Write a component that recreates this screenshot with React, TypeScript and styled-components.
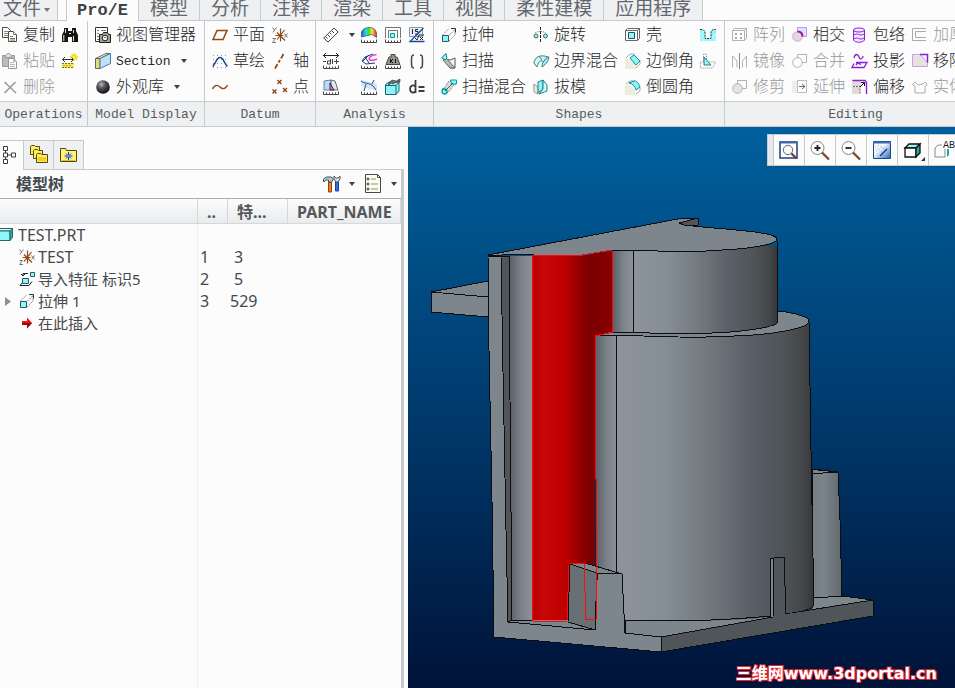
import React from "react";
import styled, { createGlobalStyle } from "styled-components";

const GlobalStyle = createGlobalStyle`
  * { box-sizing: border-box; }
  html, body, #root { height: 100%; }
  body { margin: 0; overflow: hidden; background: #fcfcfc; }
  button { font: inherit; color: inherit; }
`;

const sans = `"Noto Sans", "Noto Sans CJK SC", sans-serif`;
const mono = `"Liberation Mono", "Noto Sans CJK SC", monospace`;
const line = "#c6cacd";

/* ---------- icons ---------- */

const brown = "#8f4713";
const violet = "#8a1fd6";
const teal = "#00a0a0";
const aqua = "#8ef5f8";
const dim = "#b0b2b4";

const Ticks = () => (
  <g fill="none" stroke="#444">
    <path d="M.5 12.500v3h15v-3" />
    <path d="M3.500 13.500v2M6.500 13.500v2M9.500 13.500v2M12.500 13.500v2" />
  </g>
);

const icons: Record<string, React.ReactNode> = {
  copy: (
    <g fill="#fff" stroke="#4c4c46">
      <path d="M.5 .5h5l3 3v7h-8z" /><path d="M2 4.500h5M2 6.500h5M2 8.500h5" stroke="#87877c" />
      <path d="M6.500 4.500h5l3 3v7h-8z" /><path d="M11.500 4.500v3h3M8 9.500h3M8 11.500h5M8 13h5" stroke="#77776c" />
    </g>
  ),
  paste: (
    <g stroke="#999" fill="#bbb">
      <path d="M.5 2.500h12v11H.5z" /><path d="M3.500 2.500l2-2h2l2 2v2h-6z" fill="#ddd" />
      <path d="M6.500 5.500h5l3 3v7h-8z" fill="#fff" /><path d="M11.500 5.500v3h3M8 9.500h4M8 11.500h5M8 13.500h5" stroke="#bbb" />
    </g>
  ),
  remove: <path d="M2.500 3l11.500 11M13.500 3L2.500 14" stroke="#9b9b9b" strokeWidth="1.600" fill="none" />,
  find: (
    <g>
      <path d="M2 1h4v3h4V1h4v3l2 4v7h-6v-5H6v5H0V8l2-4z" fill="#161614" />
      <path d="M3.500 2v4M1.800 8v6M11.500 3v3M11.500 9v5M7 6.500h2" stroke="#e6e6c8" fill="none" />
    </g>
  ),
  units: (
    <g fill="none">
      <path d="M0 6.500h12M3 4L.5 6.500 3 9M9 4l2.500 2.500L9 9" stroke="#333" />
      <path d="M0 10h12v5H0z" fill="#f3e75a" /><path d="M0 10.500h12M2 12v1M5 12v1M8 12v1M0 14.500h12" stroke="#857500" strokeDasharray="2 1" />
      <path d="M12 0v3M12 5v3M8 4h3M13 4h3M9.500 1.500l2 2M12.500 4.500l2.500 2.500M14.500 1.500l-2 2" stroke="#f1dc00" strokeWidth="1.300" />
    </g>
  ),
  viewManager: (
    <g>
      <path d="M.5 .5h12v14H.5z" fill="#fff" stroke="#333" /><path d="M2 3.500h2M2 6.500h2M2 9.500h2M2 12.500h2M6 3.500h5" stroke="#777" />
      <path d="M4.500 7.500h3l1-2h4l1 2h2v8h-11z" fill="#a2a596" stroke="#20201c" /><circle cx="10" cy="11" r="2.800" fill="#eef2ff" stroke="#222" /><path d="M9 10h2v1H9z" fill="#5a74bc" />
    </g>
  ),
  section: (
    <g stroke="#666a56">
      <path d="M.5 5.500L11 .5h4l-10 5z" fill="#fff6ba" /><path d="M.5 5.500H5v10H.5z" fill="#ead978" /><path d="M5 5.500l10.500-5v10L5 15.500z" fill="#bfe2f8" stroke="#3d7dab" />
    </g>
  ),
  sphere: (
    <g>
      <defs><radialGradient id="ball" cx=".38" cy=".3" r=".7"><stop offset="0" stopColor="#b6babf" /><stop offset=".4" stopColor="#55585d" /><stop offset="1" stopColor="#101114" /></radialGradient></defs>
      <circle cx="8" cy="8" r="6.800" fill="url(#ball)" />
    </g>
  ),
  plane: <path d="M5 3.500h10l-4 9H1z" fill="none" stroke={brown} strokeWidth="1.500" />,
  sketch: (
    <g fill="none">
      <path d="M1 2.500h15M1 6.500h15M1 10.500h15M1 14.500h15" stroke="#8e98a6" strokeDasharray="1 3" />
      <path d="M.8 13.500L4 8.500C6 3 10 3 12 8.500l3.200 5" stroke="#164a94" strokeWidth="1.500" />
    </g>
  ),
  curve: <path d="M.5 10C3 5 6 6 8 8s5 3 7.500-2" fill="none" stroke={brown} strokeWidth="1.400" />,
  csys: (
    <g fill="none">
      <path d="M8.500 1.500v13M5 5.500l8 8M12.500 3L5 12.500M3.500 8.500h8" stroke={brown} strokeWidth="1.200" />
      <path d="M.5 .5l2 2.500 2-2.500M2.500 3L1 5.500M12.500 6.500l3 4M15.500 6.500l-3 4M.5 11.500h3l-3 4h3.500" stroke="#777" />
    </g>
  ),
  axis: <path d="M11.500 1l-2.500 4.500M8 7L6.500 9.500M5.500 11L3 15.500" stroke={brown} strokeWidth="1.700" fill="none" />,
  points: <path d="M5.500 1l4 4M9.500 1l-4 4M.5 10.500l4 4M4.500 10.500l-4 4M11 9l4 4M15 9l-4 4" stroke={brown} strokeWidth="1.400" fill="none" />,
  ruler: (
    <g fill="#fffefa" stroke="#444">
      <path d="M.7 11L11 1l4 4L5 15z" /><path d="M5 8l2 2M7 6l1.500 1.500M9 4l2 2M3 10l1.500 1.500" />
    </g>
  ),
  distance: (
    <g fill="none"><path d="M0 2.500h16M3 0L.5 2.500 3 5M13 0l2.500 2.500L13 5" stroke="#222" /><path d="M0 8.500h3M7.500 6v5h-3v-3h3M9.500 6v5M11 8.500h5M13.500 6v5" stroke="#444" /><Ticks /></g>
  ),
  draftCheck: (
    <g><path d="M1 2l7-1v10H1z" fill="#b9daf0" stroke="#6085a8" /><path d="M8 1l4 1 3 9H8z" fill="#e4ebee" stroke="#667" /><path d="M7 4l4 7H7z" fill="#ec64dd" stroke="#333" /><Ticks /></g>
  ),
  shade: (
    <g>
      <defs><linearGradient id="rainbow"><stop offset="0" stopColor="#214bff" /><stop offset=".3" stopColor="#28e0da" /><stop offset=".5" stopColor="#3fdb2c" /><stop offset=".7" stopColor="#f5e62c" /><stop offset="1" stopColor="#ec2045" /></linearGradient></defs>
      <path d="M.5 10V5C2 1 6 .5 9 .5c4 0 6 3 6.500 5.500v4.500L11 7.500z" fill="url(#rainbow)" stroke="#3b4a67" strokeWidth=".7" /><Ticks />
    </g>
  ),
  curvature: (
    <g fill="none"><path d="M12 1L4 4 1 8l4 3 9-1M4 4l4 6M8 2L2 8" stroke="#273a7a" /><path d="M15.500 1.500C9 2 7 6 9 7s4 0 7-1" stroke="#e044c4" strokeWidth="1.500" /><Ticks /></g>
  ),
  deviation: (
    <g fill="none"><path d="M0 1l16 4v7L0 7z" fill="#d0e4f6" /><path d="M0 2c5 4 10 0 15 9M13 1l-2 4M5 5L3 12" stroke="#214c9c" /><Ticks /></g>
  ),
  pairClearance: (
    <g fill="none"><path d="M.5 11V.5h15V11M3.500 11V3.500h9V11" stroke="#777" /><path d="M5.500 6.500h4v4h-4z" fill={aqua} stroke={teal} /><Ticks /></g>
  ),
  mass: (
    <g><path d="M6 4V1.500h4V4h2l3 7.500H1L4 4z" fill="#92958e" stroke="#44453f" /><path d="M5.500 6v4M6 8l2-2M6 8l2 2M10.500 6v4" stroke="#111" fill="none" /><Ticks /></g>
  ),
  geometryCheck: (
    <g><path d="M.5 5.500L4 3h10v9l-3 3.500H.5z" fill={aqua} stroke="#176672" /><path d="M.5 6.500H11v9M11 6.500L14 3" stroke="#176672" fill="none" /><path d="M3 5l4-4 4 1 4-2v3h-4L8 5 6 4 4 6z" fill="#6e7066" stroke="#333" strokeWidth=".6" /></g>
  ),
  modelInfo: (
    <g fill="none"><path d="M.5 .5h13v9H.5z" fill="#e7f0f8" stroke="#8b97a6" /><path d="M3.500 2v5M9 2.500H6.500v2H9V7H6" stroke="#222" /><path d="M14.500 1L1 14.500h14.500" stroke="#16479b" strokeWidth="1.300" /><path d="M6 11l2 2 2-5h5M11 10l3 3M14 10l-3 3" stroke="#222" /></g>
  ),
  brackets: <path d="M5 2C2.500 2 2.500 3 2.500 8.500S2.500 15 5 15M11 2c2.500 0 2.500 1 2.500 6.500s0 6.500-2.500 6.500" stroke="#44474a" strokeWidth="1.500" fill="none" />,
  relation: <path d="M6.500 1v13M6.500 7.500c-2-2-5.500-1-5.500 2.500s3.500 4.500 5.500 2.500M9.500 8h6M9.500 12h6" stroke="#3a3c3f" strokeWidth="1.800" fill="none" />,
  extrude: (
    <g fill="none"><path d="M1.500 8.500h6v6h-6z" fill={aqua} stroke="#285a60" /><path d="M1.500 8L8 1.500M8 8.500l6-6M8 14l6-6V2" stroke="#888" strokeDasharray="2 1" /><path d="M10 1.500h4.500v4" stroke="#333" /></g>
  ),
  sweep: (
    <g><path d="M4 6l5 1 5-2v10H9z" fill="#f4f5f5" stroke="#51585a" /><path d="M2 7l3-2 9 10H9z" fill="#b7babb" stroke="#666" /><path d="M.8 5l4-4.500L6 5 4 7z" fill={aqua} stroke="#087f8b" /></g>
  ),
  sweptBlend: (
    <g><path d="M1 10c4-1 4-5 7-8l7 3c-4 1-5 7-9 9z" fill="#d9dcdd" stroke="#81878b" strokeDasharray="2 1" /><path d="M9.500 1h6v4h-5z" fill={aqua} stroke={teal} /><circle cx="3.500" cy="12.500" r="2.500" fill={aqua} stroke={teal} strokeWidth="1.300" /><path d="M4 12l8-8" stroke="#555" /></g>
  ),
  revolve: (
    <g><path d="M7.500 0v16" stroke="#222" strokeDasharray="3 1" /><circle cx="3" cy="9" r="2" fill={aqua} stroke="#466" /><circle cx="12.500" cy="9" r="2" fill={aqua} stroke="#466" /><path d="M2 6c3-2 8-2 11 0" stroke="#777" strokeDasharray="1 1" fill="none" /></g>
  ),
  boundary: (
    <g fill="#c6fbfb" stroke="#4b757a"><path d="M.8 10C2 4 7 1 15 4l-4 5c-4-3-6 1-7 5z" /><path d="M11 8c2-3 3-4 5-4-1 5-3 7-7 10 0-2 0-4 2-6z" fill={aqua} /><path d="M6 3l3 4" fill="none" /></g>
  ),
  draft: (
    <g stroke="#287c88"><path d="M.8 5L5 8v7l-4-2z" fill="#ededd5" stroke="#999" /><path d="M5 3l5-2v9l-5 4z" fill={aqua} /><path d="M10 1l4 5v6l-8 3 4-5z" fill="#d4fafa" /></g>
  ),
  shell: (
    <g fill="none" stroke="#666"><path d="M.5 3.500l2-2h12v10l-2 2H.5zM.5 3.500h12v10M12.500 3.500l2-2" /><path d="M3.500 5.500h6v6h-6z" fill={aqua} stroke="#285358" /></g>
  ),
  chamfer: (
    <g><path d="M0 6h5l6 5v5H0z" fill="#ededdf" /><path d="M1 5l4-4h5M15 7v4l-4 4" fill="none" stroke="#aaa" /><path d="M5 5l4-3 6 6-4 4z" fill={aqua} stroke="#148b94" /></g>
  ),
  round: (
    <g><path d="M0 6h5l5 5v5H0z" fill="#ededdf" /><path d="M1 5l4-3h5M15 8v4l-4 3" fill="none" stroke="#aaa" /><path d="M4 4l5-2c4 0 5 4 6 6l-4 3c-1-4-3-6-7-7z" fill={aqua} stroke="#148b94" /></g>
  ),
  hole: (
    <g><path d="M0 3h5v9h6V3h5v11H0z" fill={aqua} /><path d="M0 8l5-5M0 12l5-5M1 15l5-4M8 15l8-8M12 15l4-4" stroke="#dfffff" /><path d="M0 2.500h3l2 2v7h6v-7l2-2h3" stroke="#234" strokeDasharray="2 1" fill="none" /></g>
  ),
  rib: (
    <g><path d="M.5 9h3V1h3v8h9l-3 6H.5z" fill="#fff" stroke="#888" strokeDasharray="1 1" /><path d="M4 4l7 8H4z" fill={aqua} stroke="#287d84" /></g>
  ),
  pattern: (
    <g fill="none" stroke={dim}><path d="M.5 3.500l2-2h12v10l-2 2H.5zM12.500 3.500v10M.5 3.500h12l2-2" /><path d="M4 6v2M9 6v2M4 10v2M9 10v2" strokeWidth="2" stroke="#aaa" /></g>
  ),
  mirror: (
    <g fill="none" stroke={dim}><path d="M7.500 0v16" stroke="#888" /><path d="M5 14.500V8L.5 3v11.500M10.500 14.500V8l4-5v11.500" /></g>
  ),
  trim: (<g fill="#e3e4e4" stroke={dim}><path d="M5.500 1.500h9v8h-9z" fill="none" /><circle cx="5.500" cy="9.500" r="4.800" /></g>),
  intersect: (
    <g><path d="M5.500 .5h9v9h-9z" fill="#e4e0ff" stroke="#aaa0ff" /><circle cx="5.500" cy="9.500" r="4.800" fill="#e0dadf" stroke="#d6a1df" /><path d="M5.500 4.500c3 0 5 2 5 5" fill="none" stroke="#9a169c" strokeWidth="2" /></g>
  ),
  merge: (<g fill="none" stroke={dim}><path d="M5.500 5V1.500h9v8h-4" /><circle cx="5.500" cy="9.500" r="4.800" /></g>),
  extend: (<g><path d="M0 2h5v12H0z" fill="#eee" /><path d="M5.500 1.500h9v12h-9z" fill="#fff" stroke="#bbb" /><path d="M7 7.500h6M10 5l3 2.500-3 2.500" stroke="#666" fill="none" /></g>),
  wrap: (
    <g fill="#f6e8ff" stroke={violet}><path d="M1.500 3v10c2 3 9 3 11 0V3" /><ellipse cx="7" cy="3" rx="5.500" ry="2" /><path d="M2 8c3-3 6 2 10-1M2 12c3-3 6 2 10-1" fill="none" /></g>
  ),
  project: (
    <g fill="none" stroke={violet} strokeWidth="1.300"><path d="M2 5c1-5 4-4 5-1s4 2 4-1M4 9.500h11l-3 5H0l2-4M4 12c3-4 3 0 5-1" /></g>
  ),
  offset: (
    <g><path d="M0 1h9v6H0zM0 8h8v7H0z" fill="#dddcd2" /><path d="M.5 1.500H13l1.500 2V15" stroke={violet} fill="none" strokeWidth="1.400" /><path d="M1 7.500h7v8" stroke="#a0408c" strokeDasharray="2 1" fill="none" /><path d="M8 8l4-4M9 3.500h3.500V7" stroke="#111" fill="none" /></g>
  ),
  thicken: (<g fill="none" stroke="#aaa"><path d="M14 1.500H.5v12H14M14 4.500H3.500v6H14" /></g>),
  removeFace: (<g><path d="M.5 1.500h15v12H.5z" fill="#e5e3dc" stroke="#c9a0ef" /><path d="M8 1.500h7.500v8z" fill="#f9f6ff" stroke="#b19cff" /><path d="M8 1.500h7.500v8" stroke={violet} fill="none" strokeWidth="1.500" /></g>),
  solidify: <path d="M.5 5.500L3 3l3 3 5-1 2-2 2 2-2 3v6H3V7z" fill="none" stroke="#aaa" />,
  treeTab: (
    <g fill="#fff" stroke="#3b3b39"><path d="M5.500 1v12M5.500 7h6" /><path d="M3.500-1.500h4v4h-4zM3.500 5h4v4h-4zM3.500 11.500h4v4h-4zM11.500 5h4v4h-4z" /></g>
  ),
  layers: (
    <g fill="#ffef55" stroke="#4e4519"><path d="M.5 .5l1-1h3l1 1h4v8h-9z" /><path d="M3.500 4.500l1-1h3l1 1h4v8h-9z" /><path d="M6.500 8.500l1-1h3l1 1h6v8h-11z" /><path d="M8 11h8v4H8z" fill="#f5c929" stroke="none" /></g>
  ),
  favorites: (
    <g><path d="M.5 2.500h5l1 2h10v11H.5z" fill="#fff37a" stroke="#534900" /><path d="M2 14.500h13" stroke="#e8bd20" /><path d="M8.500 6v8M4.500 10h8M6 7.500l5 5M11 7.500l-5 5" stroke="#1b2dcb" /><circle cx="8.500" cy="10" r="1.200" fill="#16c9cf" /></g>
  ),
  tools: (
    <g><path d="M5.500 7h3v10h-3z" fill="#e08b18" stroke="#aa3509" /><path d="M.5 6V4l3-2h5l2 2-2 3h-3V5L3 5 1 7z" fill="#b8c6c5" stroke="#405454" /><path d="M12.500 7h3v9h-3z" fill="#316fe0" stroke="#1743a0" /><path d="M11 1v3l2 3h2l2-3V1l-2 2h-2z" fill="#ddd" stroke="#555" /></g>
  ),
  settings: (
    <g><path d="M.5-.5h12l3 3v15H.5z" fill="#fffef2" stroke="#49493e" /><path d="M12.500-.5v3h3" fill="none" stroke="#49493e" /><path d="M6 4h5M6 9h7M6 14h7" stroke="#8a8a7c" /><g fill="#fff" stroke="#333"><circle cx="3" cy="4" r="1" /><circle cx="3" cy="9" r="1" /><circle cx="3" cy="14" r="1" /></g></g>
  ),
  part: (
    <g stroke="#26686a"><path d="M-3.500 3L0 .5h12.500L10 3z" fill="#d4ffff" /><path d="M-3.500 3H10v9.500H-3.500z" fill={aqua} /><path d="M10 3l2.500-2.500v9L10 12.500z" fill="#30a8ab" /></g>
  ),
  importFeature: (
    <g><path d="M3.500 7.500h6v5h-6z" fill={aqua} stroke="#235c62" /><path d="M11.500 1.500h4v4h-4z" fill={aqua} stroke="#235c62" /><path d="M9 2.500H4v2M2 3l2 2 2-2M3 12l-2 2.500h9l3-4" stroke="#222" fill="none" /></g>
  ),
  insertHere: <g><path d="M3 6h5V2.500L13 8l-5 5.500V10H3z" fill="#f30d0d" /><path d="M3 8h10l-5 5.500V10H3z" fill="#940808" /></g>,
  refit: (
    <g><path d="M1 2h17v16H1z" fill="#fff" stroke="#174083" strokeWidth="1.500" /><path d="M1 1.500h17v2H1z" fill="#396aae" /><circle cx="9" cy="10" r="4.700" fill="#f4f9fc" stroke="#666" /><path d="M12.500 13.500l5 5" stroke="#7c3d25" strokeWidth="2.300" /></g>
  ),
  zoomIn: (<g><circle cx="7.500" cy="8" r="6.500" fill="#fbfcfc" stroke="#888" /><path d="M12 12.500l7 7" stroke="#81452e" strokeWidth="2.300" /><path d="M4.500 8h6M7.500 5v6" stroke="#222" strokeWidth="1.800" /></g>),
  zoomOut: (<g><circle cx="7.500" cy="8" r="6.500" fill="#fbfcfc" stroke="#888" /><path d="M12 12.500l7 7" stroke="#81452e" strokeWidth="2.300" /><path d="M4.500 8h6" stroke="#222" strokeWidth="1.800" /></g>),
  repaint: (
    <g><defs><linearGradient id="paint" x2="1" y2="1"><stop offset=".4" stopColor="#f4f9ff" /><stop offset="1" stopColor="#2a66b6" /></linearGradient></defs><path d="M1.500 1.500h17v17h-17z" fill="url(#paint)" stroke="#184689" /><path d="M1 1.500h18v2H1z" fill="#3c6db3" /><path d="M3 6l9 8M4 11l7-5M6 5l8 5" stroke="#8b9fb5" strokeDasharray="1 2" /><path d="M8 16l7-7" stroke="#163899" strokeWidth="1.500" /></g>
  ),
  display: (<g stroke="#111" strokeWidth="1.300"><path d="M2 8l4-4h11l-4 4z" fill="#9bf6f7" /><path d="M2 8h11v9H2z" fill="#fff" /><path d="M13 8l4-4v9l-4 4z" fill="#24a6ab" /><path d="M22 17v4h-4z" fill="#333" stroke="none" /></g>),
};

const IconSvg = styled.svg`
  display: block;
  flex: none;
  overflow: visible;
`;
const Icon = ({ name, size = 16 }: { name: string; size?: number }) => (
  <IconSvg width={size} height={size} viewBox={`0 0 ${size} ${size}`} aria-hidden="true">{icons[name]}</IconSvg>
);
const Caret = ({ color = "#3e4144" }: { color?: string }) => (
  <IconSvg width="6" height="4" viewBox="0 0 6 4" aria-hidden="true"><path d="M0 0h6L3 4z" fill={color} /></IconSvg>
);

/* ---------- page ---------- */

const Page = styled.div`
  display: flex;
  flex-direction: column;
  height: 100vh;
  overflow: hidden;
  color: #46494c;
  font-family: ${sans};
`;

const TabBar = styled.nav`
  display: flex;
  flex: none;
  height: 21px;
  overflow: hidden;
`;
const TabFiller = styled.div<{ $grow?: boolean }>`
  flex: ${(p) => (p.$grow ? "1 0 0" : "0 0 8px")};
  border-bottom: 1px solid ${line};
`;
const Tab = styled.button<{ $active?: boolean }>`
  flex: none;
  height: 21px;
  padding: 0 ${(p) => (p.$active ? "10px" : "11px")};
  border: 0 solid ${line};
  border-right-width: 1px;
  border-bottom-width: ${(p) => (p.$active ? 0 : 1)}px;
  border-left-width: ${(p) => (p.$active ? 1 : 0)}px;
  background: ${(p) => (p.$active ? "#fcfcfc" : "#eef0f2")};
  color: ${(p) => (p.$active ? "#3f4245" : "#64686d")};
  font-family: ${mono};
  font-size: ${(p) => (p.$active ? 17 : 19)}px;
  font-weight: ${(p) => (p.$active ? 700 : 400)};
  line-height: 20px;
  white-space: nowrap;
`;
const FileTab = styled(Tab)`
  display: flex;
  align-items: center;
  gap: 3px;
  padding: 0 7px 0 3px;
`;

const Ribbon = styled.div`
  display: flex;
  flex: none;
  overflow: hidden;
`;
const Group = styled.section<{ $width: number }>`
  display: flex;
  flex: 0 0 ${(p) => p.$width}px;
  flex-direction: column;
  border-right: 1px solid ${line};
`;
const Commands = styled.div<{ $columns: string; $inset: number }>`
  display: grid;
  grid-template-columns: ${(p) => p.$columns};
  grid-template-rows: repeat(3, 26px);
  height: 81px;
  padding: 1px 0 0 ${(p) => p.$inset}px;
  border-bottom: 1px solid ${line};
`;
const GroupName = styled.h2`
  height: 25px;
  margin: 0;
  border-bottom: 1px solid ${line};
  background: #eef0f2;
  color: #585c60;
  font: 400 13px/26px ${mono};
  text-align: center;
  white-space: nowrap;
`;
const Command = styled.button<{ $latin?: boolean }>`
  display: flex;
  align-items: center;
  gap: 5px;
  padding: 0;
  border: 0;
  background: none;
  color: #26282a;
  font: 300 ${(p) => (p.$latin ? 13 : 16)}px/24px ${mono};
  white-space: nowrap;
  &:disabled { color: #95989b; }
`;
const Label = styled.span`
  padding-top: 1px;
`;

type Cmd = { icon: string; text?: string; label?: string; off?: boolean; menu?: boolean } | null;
type GroupData = { name: string; width: number; columns: string; inset?: number; items: Cmd[] };

const groups: GroupData[] = [
  {
    name: "Operations", width: 88, columns: "60px 24px", inset: 2,
    items: [
      { icon: "copy", text: "复制" }, { icon: "find", label: "查找" },
      { icon: "paste", text: "粘贴", off: true }, { icon: "units", label: "单位" },
      { icon: "remove", text: "删除", off: true }, null,
    ],
  },
  {
    name: "Model Display", width: 117, columns: "1fr",
    items: [{ icon: "viewManager", text: "视图管理器" }, { icon: "section", text: "Section", menu: true }, { icon: "sphere", text: "外观库", menu: true }],
  },
  {
    name: "Datum", width: 111, columns: "60px 1fr",
    items: [
      { icon: "plane", text: "平面" }, { icon: "csys", label: "坐标系" },
      { icon: "sketch", text: "草绘" }, { icon: "axis", text: "轴" },
      { icon: "curve", label: "曲线" }, { icon: "points", text: "点" },
    ],
  },
  {
    name: "Analysis", width: 117, columns: "38px 24px 24px 24px",
    items: [
      { icon: "ruler", label: "测量", menu: true }, { icon: "shade", label: "着色曲率" }, { icon: "pairClearance", label: "间隙" }, { icon: "modelInfo", label: "参数" },
      { icon: "distance", label: "距离" }, { icon: "curvature", label: "曲率" }, { icon: "mass", label: "质量属性" }, { icon: "brackets", label: "括号" },
      { icon: "draftCheck", label: "拔模分析" }, { icon: "deviation", label: "偏差" }, { icon: "geometryCheck", label: "几何检查" }, { icon: "relation", label: "关系" },
    ],
  },
  {
    name: "Shapes", width: 291, columns: "92px 92px 75px 24px",
    items: [
      { icon: "extrude", text: "拉伸" }, { icon: "revolve", text: "旋转" }, { icon: "shell", text: "壳" }, { icon: "hole", label: "孔" },
      { icon: "sweep", text: "扫描" }, { icon: "boundary", text: "边界混合" }, { icon: "chamfer", text: "边倒角" }, { icon: "rib", label: "筋" },
      { icon: "sweptBlend", text: "扫描混合" }, { icon: "draft", text: "拔模" }, { icon: "round", text: "倒圆角" }, null,
    ],
  },
  {
    name: "Editing", width: 262, columns: "60px 60px 60px 60px",
    items: [
      { icon: "pattern", text: "阵列", off: true }, { icon: "intersect", text: "相交" }, { icon: "wrap", text: "包络" }, { icon: "thicken", text: "加厚", off: true },
      { icon: "mirror", text: "镜像", off: true }, { icon: "merge", text: "合并", off: true }, { icon: "project", text: "投影" }, { icon: "removeFace", text: "移除" },
      { icon: "trim", text: "修剪", off: true }, { icon: "extend", text: "延伸", off: true }, { icon: "offset", text: "偏移" }, { icon: "solidify", text: "实体化", off: true },
    ],
  },
];

const Workspace = styled.div`
  display: flex;
  flex: 1;
  min-height: 0;
`;

/* ---------- model tree ---------- */

const Sidebar = styled.aside`
  display: flex;
  flex: 0 0 408px;
  flex-direction: column;
  padding: 13px 4px 0 0;
`;
const PanelTabs = styled.div`
  display: flex;
  flex: none;
  height: 30px;
  border-bottom: 1px solid ${line};
`;
const PanelTab = styled.button<{ $active?: boolean }>`
  display: flex;
  flex: 0 0 ${(p) => (p.$active ? 24 : 30)}px;
  align-items: center;
  justify-content: ${(p) => (p.$active ? "flex-start" : "center")};
  height: ${(p) => (p.$active ? 30 : 29)}px;
  padding: 0;
  border: 1px solid ${line};
  border-width: 1px 1px 0 0;
  background: ${(p) => (p.$active ? "#fcfcfc" : "#eef0f2")};
`;
const Panel = styled.div`
  display: flex;
  flex: 1;
  flex-direction: column;
  min-height: 0;
  border-right: 3px solid ${line};
`;
const PanelHead = styled.header`
  display: flex;
  flex: none;
  align-items: center;
  height: 29px;
  padding: 0 4px 0 16px;
  border-bottom: 1px solid #aaadb0;
`;
const Title = styled.h1`
  flex: 1;
  margin: 0;
  font: 700 16px/24px ${sans};
`;
const HeadButton = styled.button`
  display: flex;
  align-items: center;
  gap: 8px;
  margin-left: 10px;
  padding: 0;
  border: 0;
  background: none;
`;

const TreeTable = styled.table`
  width: 100%;
  table-layout: fixed;
  border-collapse: separate;
  border-spacing: 0;
  font-size: 16px;
  line-height: 22px;
`;
const Th = styled.th<{ $width?: number }>`
  width: ${(p) => (p.$width ? `${p.$width}px` : "auto")};
  height: 25px;
  padding: 2px 0 0 9px;
  border: solid #d5d8da;
  border-width: 0 1px 1px 0;
  background: linear-gradient(#fcfcfc, #e9ebed);
  color: #55585b;
  font-weight: 700;
  line-height: 22px;
  text-align: left;
  white-space: nowrap;
`;
const Td = styled.td<{ $indent?: number; $line?: boolean }>`
  height: 22px;
  padding: 0 0 0 ${(p) => p.$indent ?? 6}px;
  border-right: 1px solid ${(p) => (p.$line ? "#eff0f2" : "transparent")};
  white-space: nowrap;
`;
const Node = styled.div<{ $chinese?: boolean }>`
  display: flex;
  align-items: center;
  gap: 3px;
  height: 22px;
  font-size: ${(p) => (p.$chinese ? 15 : 16)}px;
`;
const Expander = styled.button`
  display: flex;
  width: 11px;
  padding: 0;
  border: 0;
  background: none;
`;
const TreeRest = styled.div`
  flex: 1;
  width: 198px;
  border-right: 1px solid #eff0f2;
`;

const nodes = [
  { icon: "part", name: "TEST.PRT", indent: 0, id: "", feature: "", pad: 6 },
  { icon: "csys", name: "TEST", indent: 19, id: "1", feature: "3", pad: 6 },
  { icon: "importFeature", name: "导入特征 标识5", indent: 19, id: "2", feature: "5", pad: 6, chinese: true },
  { icon: "extrude", name: "拉伸 1", indent: 5, id: "3", feature: "529", pad: 2, chinese: true, open: true },
  { icon: "insertHere", name: "在此插入", indent: 19, id: "", feature: "", pad: 6, chinese: true },
];

/* ---------- graphics area ---------- */

const Viewport = styled.main`
  position: relative;
  flex: 1;
  min-width: 0;
  overflow: hidden;
  background: linear-gradient(#00609d 0%, #003c6f 48%, #001339 100%);
`;
const Scene = styled.svg`
  display: block;
  width: 100%;
  height: 100%;
`;
const ViewBar = styled.div`
  position: absolute;
  top: 7px;
  right: -5px;
  display: flex;
  border: 1px solid ${line};
  background: #fcfcfc;
`;
const Grip = styled.div`
  width: 5px;
  background: #e6eaee;
`;
const ViewButton = styled.button`
  display: flex;
  align-items: center;
  justify-content: center;
  width: 31px;
  height: 30px;
  padding: 0;
  border: 0;
  border-left: 1px solid ${line};
  background: none;
`;
const Watermark = styled.a`
  position: absolute;
  right: 18px;
  bottom: 2px;
  color: #fff;
  font: 700 16px/24px "DejaVu Sans", "Noto Sans CJK SC", sans-serif;
  text-decoration: none;
  white-space: nowrap;
  paint-order: stroke fill;
  -webkit-text-stroke: 2px #e52630;
`;

const steel = "#7e868d";
const dark = "#50555a";

const Model = () => (
  <Scene viewBox="408 127 547 561" role="img" aria-label="TEST.PRT">
    <defs>
      <linearGradient id="cyl"><stop offset="0" stopColor="#8d949c" /><stop offset=".25" stopColor="#858d95" /><stop offset=".48" stopColor="#70777c" /><stop offset=".68" stopColor="#5a5e67" /><stop offset=".85" stopColor="#4d5356" /><stop offset=".95" stopColor="#434648" /><stop offset="1" stopColor="#343638" /></linearGradient>
      <linearGradient id="fillet"><stop offset="0" stopColor="#585e65" /><stop offset=".5" stopColor="#7a8188" /><stop offset="1" stopColor="#8c939b" /></linearGradient>
      <linearGradient id="red" gradientUnits="userSpaceOnUse" x1="532" x2="613" y1="0" y2="0"><stop offset="0" stopColor="#b50000" /><stop offset=".14" stopColor="#c80707" /><stop offset=".4" stopColor="#bc0000" /><stop offset=".55" stopColor="#9c0000" /><stop offset=".72" stopColor="#7b0000" /><stop offset="1" stopColor="#890000" /></linearGradient>
      <linearGradient id="boss"><stop offset="0" stopColor="#767e85" /><stop offset=".4" stopColor="#7c848b" /><stop offset="1" stopColor="#60686c" /></linearGradient>
    </defs>
    <g stroke="#0c0d0e" strokeLinejoin="round" shapeRendering="crispEdges">
      <path d="M812 469l26 3 2 48 2 76-30 3z" fill="url(#boss)" />
      <path d="M812 474l11-1 15-1-20-2-6-1z" fill={steel} />
      <path d="M625 620l189-22 28-2 31 4-212 37-36-4z" fill={steel} />
      <path d="M431 292l57-11v16zM431 292v20l57 5v-20z" fill={steel} />
      <path d="M508 618h90v14l-90-10z" fill={steel} stroke="none" />
      <path d="M488 256l1 94 3 150 2 137 167 15v-15l-36-4-3-59-25-2-2 58-87-8-7-366z" fill={steel} />
      <path d="M509 256h24v364h-22z" fill="url(#fillet)" stroke="none" />
      <path d="M501 257l2 115 3 158 2 92 4-2-2-220-1-144z" fill={dark} />
      <path d="M616 335v285c25 2 75 2 115 0 30-1 58-5 74-9l8-3 1-4-1-47-1-47-1-60-2-129z" fill="url(#cyl)" stroke="none" />
      <path d="M595 335h21l2 285h-22z" fill="url(#fillet)" stroke="none" />
      <path d="M778 311c18 2 31 6 31 10 0 8-40 14-75 15-30 2-83 1-107-1h-32l18-4 65-10z" fill={steel} />
      <path d="M612 250h21v83h-20z" fill="url(#fillet)" stroke="none" />
      <path d="M633 246h144v76c0 5-35 10-66 11h-61l-17-1z" fill="url(#cyl)" stroke="none" />
      <path d="M488 255l195-37 15 0v6l-14 1c30 4 93 6 93 14 0 6-32 10-55 11-22 2-57 2-80 0h-30l-17 3-13 2h-48l-18-1-28 2z" fill={steel} />
      <path d="M679 223l19-5v7h-14z" fill={dark} />
      <path d="M777 239l1 83c-1 5-35 10-66 11h-62l-17-1h-20M633 250v82M616 335l1 238M809 321l2 129 2 107 1 47c0 5-14 9-28 10M625 620c35 2 95 1 145-4M511 620h22" fill="none" />
      <path d="M532 256h50l30-5 1 81-18 4v194l1 90h-63z" fill="url(#red)" stroke="none" />
      <path d="M570 564l27 9-2 57-27-8z" fill="#687075" />
      <path d="M570 564l15-1 37 11-25-1z" fill={steel} />
      <path d="M597 573l25 1 3 46v13l-30-3z" fill={steel} stroke="none" />
      <path d="M597 580l1-7 24 1 3 59 36 4M597 600l-2 30-87-8" fill="none" />
      <path d="M661 637l112-20 1-59 10-1 2 57 24-4 63-10v16l-212 36z" fill={dark} />
      <path d="M773 617l1-59 10-1 2 57 22-3 0 3-30 5z" fill={dark} stroke="none" />
      <path d="M773 617l1-59 10-1 2 57" fill="none" />
      <path d="M770 559l4-1-1 59-3 1z" fill="#7b858b" />
      <path d="M532 256l4-1h46l30-5 1 82-18 4 2 283-11 1-2-57-15 1-2 57h-34l-1-320z" fill="none" stroke="#ff0a0a" />
    </g>
  </Scene>
);

const views = [["refit", "重新调整"], ["zoomIn", "放大"], ["zoomOut", "缩小"], ["repaint", "重画"], ["display", "显示样式"]];
const tabs = ["模型", "分析", "注释", "渲染", "工具", "视图", "柔性建模", "应用程序"];

export default function App() {
  return (
    <Page>
      <GlobalStyle />
      <TabBar>
        <FileTab>文件<Caret color="#74787c" /></FileTab>
        <TabFiller />
        <Tab $active>Pro/E</Tab>
        {tabs.map((t) => <Tab key={t}>{t}</Tab>)}
        <TabFiller $grow />
      </TabBar>
      <Ribbon>
        {groups.map((g) => (
          <Group key={g.name} $width={g.width}>
            <Commands $columns={g.columns} $inset={g.inset ?? 7}>
              {g.items.map((c, i) =>
                c ? (
                  <Command key={i} disabled={c.off} aria-label={c.label} $latin={c.text === "Section"}>
                    <Icon name={c.icon} />
                    {c.text && <Label>{c.text}</Label>}
                    {c.menu && <><span /><Caret /></>}
                  </Command>
                ) : <span key={i} />
              )}
            </Commands>
            <GroupName>{g.name}</GroupName>
          </Group>
        ))}
      </Ribbon>
      <Workspace>
        <Sidebar>
          <PanelTabs>
            <PanelTab $active aria-label="模型树"><Icon name="treeTab" /></PanelTab>
            <PanelTab aria-label="层"><Icon name="layers" size={18} /></PanelTab>
            <PanelTab aria-label="收藏夹"><Icon name="favorites" size={18} /></PanelTab>
          </PanelTabs>
          <Panel>
            <PanelHead>
              <Title>模型树</Title>
              <HeadButton aria-label="工具"><Icon name="tools" size={18} /><Caret /></HeadButton>
              <HeadButton aria-label="设置"><Icon name="settings" size={18} /><Caret /></HeadButton>
            </PanelHead>
            <TreeTable>
              <thead>
                <tr><Th $width={198} aria-label="名称" /><Th $width={30}>..</Th><Th $width={60}>特...</Th><Th>PART_NAME</Th></tr>
              </thead>
              <tbody>
                {nodes.map((n) => (
                  <tr key={n.name}>
                    <Td $indent={n.indent} $line>
                      <Node $chinese={n.chinese}>
                        {n.open && (
                          <Expander aria-label="展开"><IconSvg width="6" height="9" viewBox="0 0 6 9"><path d="M0 0l6 4.500L0 9z" fill="#8c8e90" /></IconSvg></Expander>
                        )}
                        <Icon name={n.icon} size={n.icon === "part" ? 15 : 16} />
                        {n.name}
                      </Node>
                    </Td>
                    <Td $indent={2}>{n.id}</Td>
                    <Td $indent={n.pad}>{n.feature}</Td>
                    <Td />
                  </tr>
                ))}
              </tbody>
            </TreeTable>
            <TreeRest />
          </Panel>
        </Sidebar>
        <Viewport>
          <Model />
          <ViewBar role="toolbar">
            <Grip />
            {views.map(([icon, label]) => <ViewButton key={icon} aria-label={label}><Icon name={icon} size={20} /></ViewButton>)}
            <ViewButton aria-label="注释显示">
              <IconSvg width="20" height="20" viewBox="0 0 20 20">
                <path d="M8 5H4L1 8v9h10V9" fill="none" stroke="#888" /><path d="M13 9h2v6l-2 2z" fill="#20a9a6" />
                <text x="9" y="8" fontFamily="Liberation Mono" fontSize="10" fill="#222">AB</text>
              </IconSvg>
            </ViewButton>
          </ViewBar>
          <Watermark href="#">三维网www.3dportal.cn</Watermark>
        </Viewport>
      </Workspace>
    </Page>
  );
}
